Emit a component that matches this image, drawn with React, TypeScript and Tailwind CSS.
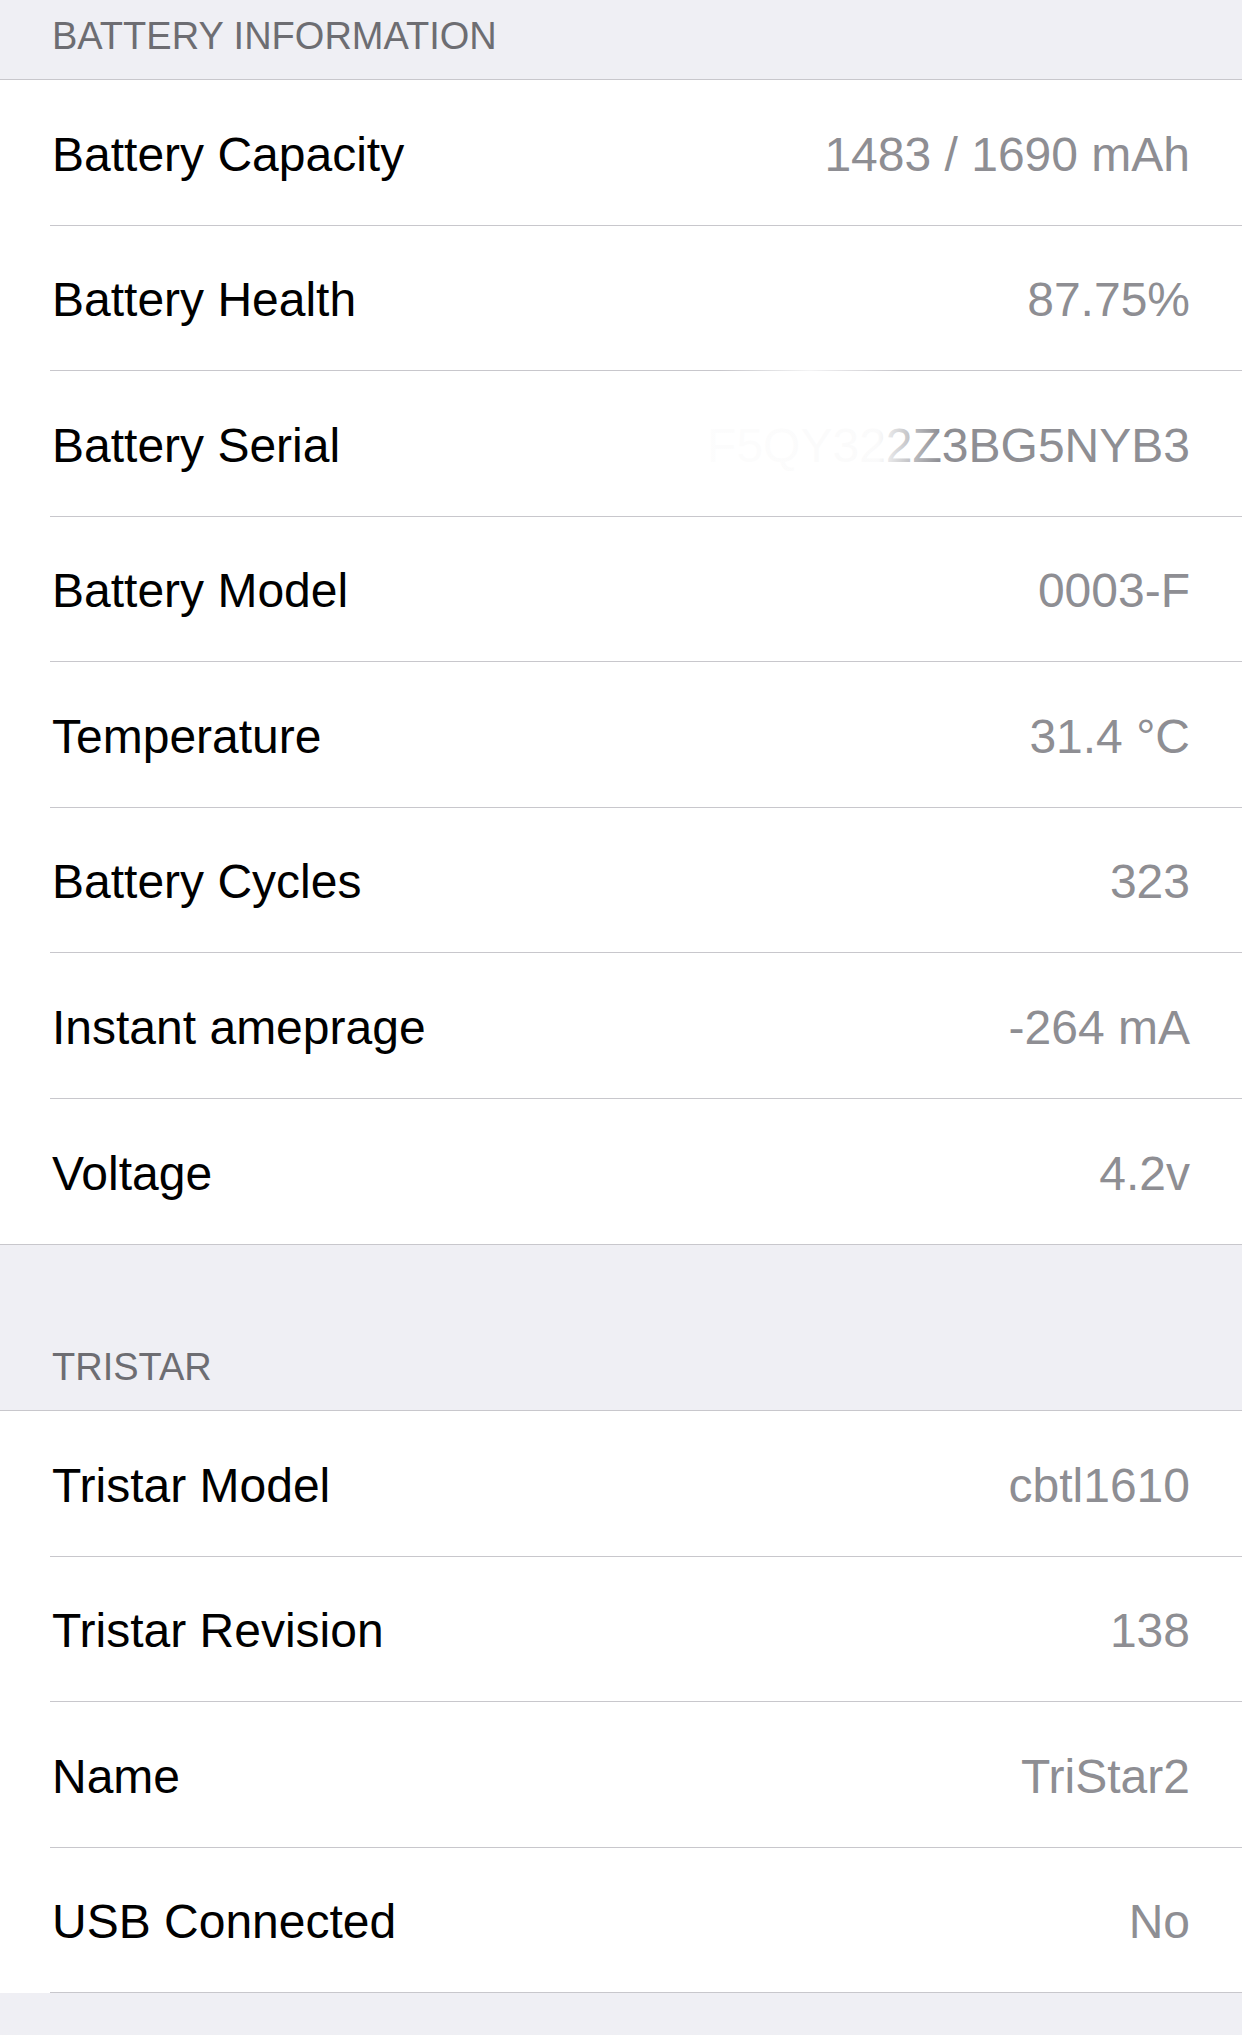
import React from 'react';

type Item = { label: string; value: string; masked?: boolean };

const battery: Item[] = [
  { label: 'Battery Capacity', value: '1483 / 1690 mAh' },
  { label: 'Battery Health', value: '87.75%' },
  { label: 'Battery Serial', value: 'F5QY322Z3BG5NYB3', masked: true },
  { label: 'Battery Model', value: '0003-F' },
  { label: 'Temperature', value: '31.4 °C' },
  { label: 'Battery Cycles', value: '323' },
  { label: 'Instant ameprage', value: '-264 mA' },
  { label: 'Voltage', value: '4.2v' },
];

const tristar: Item[] = [
  { label: 'Tristar Model', value: 'cbtl1610' },
  { label: 'Tristar Revision', value: '138' },
  { label: 'Name', value: 'TriStar2' },
  { label: 'USB Connected', value: 'No' },
];

function Header({ title, tall }: { title: string; tall?: boolean }) {
  return (
    <div
      className={`flex items-end border-b border-[#c8c7cc] bg-[#efeff4] pb-[24px] pl-[52px] ${tall ? 'h-[166px]' : 'h-[80px]'}`}
    >
      <span className="text-[38px] leading-none text-[#6d6d72]">{title}</span>
    </div>
  );
}

function Row({ item, last }: { item: Item; last?: boolean }) {
  return (
    <div className="relative bg-white pl-[50px]">
      <div
        className={`flex h-[145.5px] items-center justify-between pl-[2px] pr-[52px] pt-[5px] ${last ? '' : 'border-b border-[#c8c7cc]'}`}
      >
        <span className="text-[48px] text-black">{item.label}</span>
        <span className="text-[48px] text-[#8e8e93]">{item.value}</span>
      </div>
      {item.masked && (
        <>
          <div className="absolute left-[720px] top-[-3px] h-[5px] w-[180px] bg-gradient-to-r from-transparent via-white/80 to-transparent" />
          <div className="absolute left-[695px] top-[30px] h-[90px] w-[245px] bg-gradient-to-r from-white/[0.98] via-white/[0.96] via-75% to-white/0" />
        </>
      )}
    </div>
  );
}

export default function App() {
  return (
    <div className="min-h-screen bg-[#efeff4] font-['Liberation_Sans',Arial,sans-serif]">
      <Header title="BATTERY INFORMATION" />
      <div className="border-b border-[#c8c7cc]">
        {battery.map((b, i) => (
          <Row key={b.label} item={b} last={i === battery.length - 1} />
        ))}
      </div>
      <Header title="TRISTAR" tall />
      <div>
        {tristar.map(t => (
          <Row key={t.label} item={t} />
        ))}
      </div>
    </div>
  );
}
